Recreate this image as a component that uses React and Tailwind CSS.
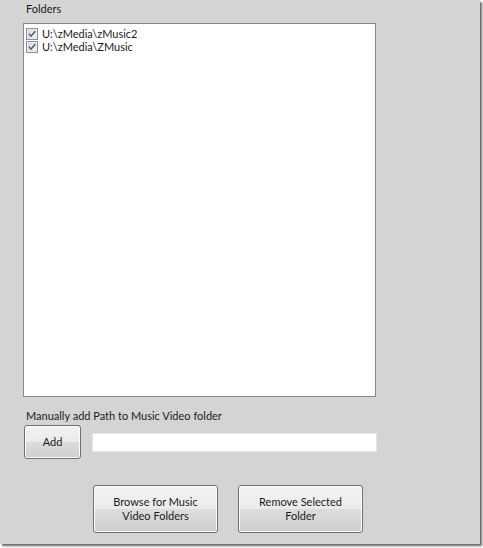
import React from 'react';

const font = { fontFamily: 'Lato, "Noto Sans", Arial, sans-serif' };

const CheckBox = () => (
  <svg width="12" height="12" viewBox="0 0 12 12" className="shrink-0">
    <defs>
      <linearGradient id="cbg" x1="0" y1="0" x2="1" y2="1">
        <stop offset="0" stopColor="#dcdcdc" />
        <stop offset="1" stopColor="#fbfbfb" />
      </linearGradient>
    </defs>
    <rect x="0.5" y="0.5" width="11" height="11" fill="#ffffff" stroke="#8e8f8f" />
    <rect x="2" y="2" width="8" height="8" fill="url(#cbg)" stroke="#c2c6cb" strokeWidth="0.6" />
    <path d="M3 5.8 L5 8.2 L9.2 3.2" fill="none" stroke="#3c5a8a" strokeWidth="1.5" />
  </svg>
);

const WinButton = ({ className, children }) => (
  <button
    className={
      'rounded-[3px] border border-[#707070] text-[11px] leading-[14px] text-[#1b1b1b] shadow-[inset_0_0_0_1px_#fcfcfc] bg-[linear-gradient(to_bottom,#f2f2f2_0%,#ebebeb_50%,#dddddd_51%,#cfcfcf_100%)] ' +
      className
    }
  >
    {children}
  </button>
);

const folders = ['U:\\zMedia\\zMusic2', 'U:\\zMedia\\ZMusic'];

export default function App() {
  return (
    <div className="bg-white w-[483px] h-[548px]" style={font}>
      <div className="w-[480px] h-[544px] bg-[#d4d4d4] shadow-[2px_2px_2px_rgba(0,0,0,0.6)] pl-[23px] pt-[1px] flex flex-col text-[#1b1b1b]">
        <div className="text-[11px] leading-[16px] pl-[3px] h-[22px]">Folders</div>
        <div className="w-[353px] h-[374px] bg-white border border-[#828790] pt-[3px] pl-[2px]">
          {folders.map((f) => (
            <div key={f} className="flex items-center h-[13px] gap-[4px] text-[11px] leading-[13px]">
              <CheckBox />
              <span>{f}</span>
            </div>
          ))}
        </div>
        <div className="mt-[11px] text-[11px] leading-[16px] pl-[3px]">Manually add Path to Music Video folder</div>
        <div className="mt-[1px] flex items-center">
          <WinButton className="w-[57px] h-[34px] ml-[1px]">Add</WinButton>
          <input className="ml-[11px] w-[285px] h-[19px] bg-white border border-[#e6e6e6] outline-none" />
        </div>
        <div className="mt-[26px] flex gap-[20px] pl-[70px]">
          <WinButton className="w-[125px] h-[48px]">
            Browse for Music
            <br />
            Video Folders
          </WinButton>
          <WinButton className="w-[125px] h-[48px]">
            Remove Selected
            <br />
            Folder
          </WinButton>
        </div>
      </div>
    </div>
  );
}
